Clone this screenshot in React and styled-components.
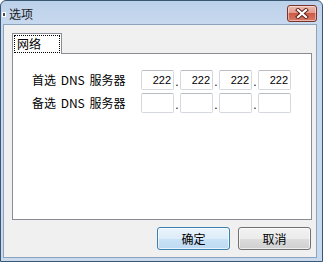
import React from 'react';
import styled, { createGlobalStyle } from 'styled-components';

const GlobalStyle = createGlobalStyle`
    html, body {
        margin: 0;
        padding: 0;
        background: #ffffff;
    }
    * {
        box-sizing: border-box;
    }
`

const cjk = `"Noto Sans CJK SC", "Liberation Sans", sans-serif`;

const dnsRows = [
    {key: "primary", label: "首选 DNS 服务器", parts: ["222", "222", "222", "222"]},
    {key: "secondary", label: "备选 DNS 服务器", parts: ["", "", "", ""]}
];

const Window = styled.div`
    width: 323px;
    height: 262px;
    border: 1px solid #3a5673;
    border-radius: 6px 6px 0 0;
    background: linear-gradient(180deg, #bcd1ea 0px, #c7d9ee 24px, #c9daee 100%);
    display: flex;
    flex-direction: column;
    overflow: hidden;
`

const TitleBar = styled.div`
    height: 23px;
    flex: none;
    display: flex;
    align-items: flex-start;
    padding: 4px 5px 0 2px;
`

const TitleIcon = styled.span`
    width: 2px;
    height: 3px;
    margin-top: 7px;
    margin-left: -1px;
    background: #4a4a4a;
    border: 1px solid #ffffff;
    box-sizing: content-box;
`

const TitleText = styled.span`
    font-family: ${cjk};
    font-size: 12px;
    line-height: 17px;
    color: #1b1b1b;
    margin-left: 3px;
    flex: 1;
`

const CloseButton = styled.div`
    width: 30px;
    height: 17px;
    border: 1px solid #7a3229;
    border-radius: 3px;
    background: linear-gradient(180deg, #eebbb0 0%, #e29a8b 45%, #cc5a46 50%, #d77c68 100%);
    display: flex;
    align-items: center;
    justify-content: center;
    box-shadow: inset 0 0 0 1px rgba(255, 255, 255, 0.45);
`

const Client = styled.div`
    flex: 1;
    margin: 0 5px 3px 2px;
    border: 1px solid #8da3bd;
    background: #f0f0f0;
    padding: 8px 4px 7px 8px;
    display: flex;
    flex-direction: column;
`

const TabStrip = styled.div`
    height: 20px;
    display: flex;
    align-items: flex-end;
`

const Tab = styled.div`
    width: 50px;
    height: 21px;
    margin-bottom: -1px;
    position: relative;
    z-index: 1;
    background: #ffffff;
    border: 1px solid #898c95;
    border-bottom: none;
    padding: 1px 1px 0 1px;
`

const FocusBox = styled.div`
    height: 18px;
    border: 1px dotted #000000;
    font-family: ${cjk};
    font-size: 12px;
    line-height: 16px;
    color: #000000;
    padding-left: 2px;
`

const Panel = styled.div`
    height: 167px;
    background: #ffffff;
    border: 1px solid #898c95;
    padding: 16px 0 0 19px;
    display: grid;
    grid-template-columns: 109px auto;
    grid-auto-rows: 20px;
    row-gap: 3px;
    align-content: start;
`

const Label = styled.div`
    font-family: ${cjk};
    font-size: 12px;
    line-height: 20px;
    color: #000000;
    word-spacing: 2px;
`

const IpField = styled.div`
    display: flex;
    align-items: stretch;
`

const Octet = styled.div`
    width: 33px;
    height: 20px;
    border: 1px solid #d5d8de;
    border-top-color: #b9bcc3;
    border-radius: 2px;
    background: #ffffff;
    font-family: "Liberation Sans", Arial, sans-serif;
    font-size: 11px;
    line-height: 18px;
    text-align: right;
    padding-right: 2px;
    color: #000000;
`

const Dot = styled.span`
    width: 6px;
    font-family: "Liberation Sans", Arial, sans-serif;
    font-size: 12px;
    line-height: 24px;
    text-align: center;
    color: #000000;
`

const ButtonRow = styled.div`
    display: flex;
    justify-content: flex-end;
    gap: 8px;
    margin-top: 7px;
    margin-right: 1px;
`

const Button = styled.div`
    width: 73px;
    height: 23px;
    border-radius: 3px;
    border: 1px solid ${props => props.$primary ? '#3c7fb1' : '#707070'};
    background: ${props => props.$primary
        ? 'linear-gradient(180deg, #eaf4fc 0%, #dcecf9 50%, #c9e2f5 51%, #bcdaf2 100%)'
        : 'linear-gradient(180deg, #f2f2f2 0%, #ebebeb 50%, #dddddd 51%, #cfcfcf 100%)'};
    box-shadow: inset 0 0 0 1px rgba(255, 255, 255, 0.65);
    font-family: ${cjk};
    font-size: 12px;
    line-height: 21px;
    text-align: center;
    color: #000000;
`

function DnsRow(props) {
    const row = props.row;
    return (
        <>
            <Label>{row.label}</Label>
            <IpField>
                {row.parts.map((part, i) => (
                    <React.Fragment key={row.key + '-' + i}>
                        {i > 0 && <Dot>.</Dot>}
                        <Octet>{part}</Octet>
                    </React.Fragment>
                ))}
            </IpField>
        </>
    );
}

export default function App() {
    return (
        <>
            <GlobalStyle />
            <Window>
                <TitleBar>
                    <TitleIcon />
                    <TitleText>选项</TitleText>
                    <CloseButton>
                        <svg width="14" height="11" viewBox="0 0 14 11">
                            <path d="M3 2 L11 9 M11 2 L3 9" stroke="#5a1d16" strokeWidth="4" strokeLinecap="square" />
                            <path d="M3 2 L11 9 M11 2 L3 9" stroke="#ffffff" strokeWidth="2.2" strokeLinecap="square" />
                        </svg>
                    </CloseButton>
                </TitleBar>
                <Client>
                    <TabStrip>
                        <Tab>
                            <FocusBox>网络</FocusBox>
                        </Tab>
                    </TabStrip>
                    <Panel>
                        {dnsRows.map(row => <DnsRow key={row.key} row={row} />)}
                    </Panel>
                    <ButtonRow>
                        <Button $primary>确定</Button>
                        <Button>取消</Button>
                    </ButtonRow>
                </Client>
            </Window>
        </>
    );
}
